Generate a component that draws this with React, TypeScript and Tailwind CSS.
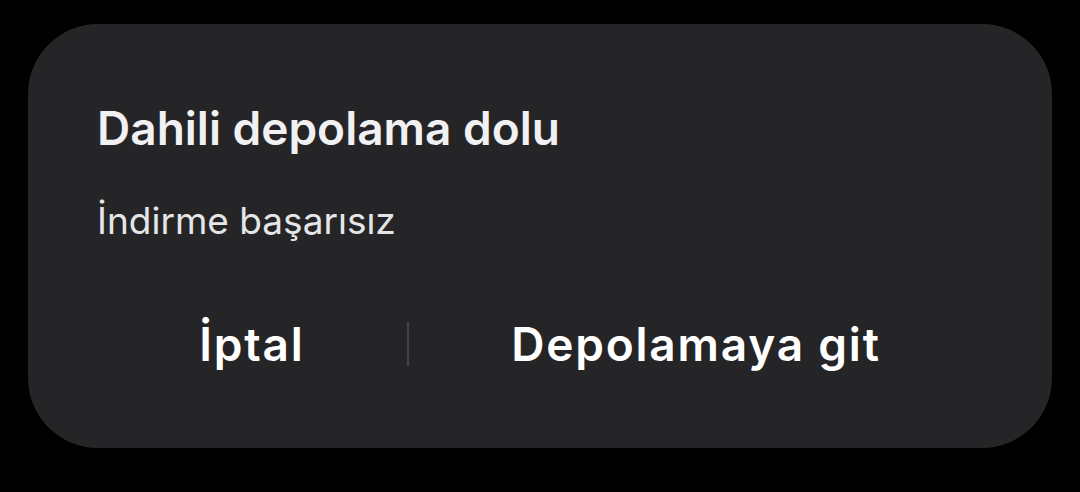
import React from 'react';

export default function App() {
  return (
    <div className="w-[1080px] h-[492px] bg-black pt-6 px-7 font-['Inter','Noto_Sans',sans-serif]">
      <div className="h-[424px] rounded-[70px] bg-[#252527] px-[69px] pt-[76px] flex flex-col">
        <h1 className="text-[46px] leading-[56px] font-semibold text-[#f1f1f3]">
          Dahili depolama dolu
        </h1>
        <p className="mt-[43px] text-[37px] leading-[44px] text-[#e6e6e8]">İndirme başarısız</p>
        <div className="mt-[73px] flex items-center">
          <button className="flex-auto text-[46px] leading-[56px] font-semibold tracking-[1.8px] text-white">İptal</button>
          <div className="w-[2px] h-[44px] bg-[#434345]" />
          <button className="flex-auto text-[46px] leading-[56px] font-semibold tracking-[1.8px] text-white">Depolamaya git</button>
        </div>
      </div>
    </div>
  );
}
